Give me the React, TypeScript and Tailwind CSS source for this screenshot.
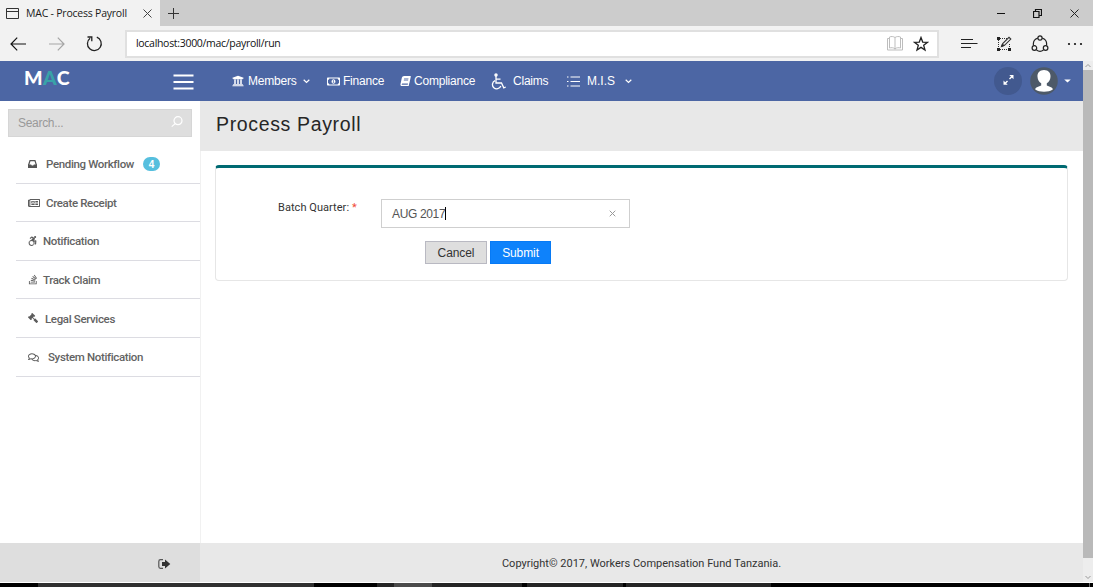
import React from "react";
import {
  FaUniversity,
  FaRegMoneyBillAlt,
  FaBook,
  FaRegNewspaper,
  FaAccessibleIcon,
  FaStackOverflow,
  FaGavel,
  FaRegComments,
} from "react-icons/fa";

function TabStrip() {
  return (
    <div className="flex h-[26px] bg-[#cccccc] font-['Open_Sans','Noto_Sans',sans-serif] text-[#1a1a1a]">
      <div className="flex w-[160px] items-center bg-[#f2f2f2] pl-[6px]">
        <svg width="13" height="11" viewBox="0 0 13 11" fill="none" stroke="#333">
          <path d="M.5.5h12v10H.5zM.5 3.500h12" />
        </svg>
        <span className="mt-px ml-[7px] w-[101px] whitespace-nowrap text-[10.5px] tracking-[-0.22px]">MAC - Process Payroll</span>
        <svg className="ml-[16px]" width="9" height="9" viewBox="0 0 9 9" stroke="#444">
          <path d="M.5.5l8 8M8.500.5l-8 8" />
        </svg>
      </div>
      <div className="flex flex-1 items-center pl-[8px]">
        <svg width="11" height="11" viewBox="0 0 11 11" stroke="#333">
          <path d="M5.500 0v11M0 5.500h11" />
        </svg>
      </div>
      <div className="flex items-center pr-[14px]">
        <svg width="9" height="9" viewBox="0 0 9 9" stroke="#111">
          <path d="M1 4.500h8" />
        </svg>
        <svg className="ml-[28px]" width="9" height="9" viewBox="0 0 9 9" fill="none" stroke="#111">
          <path d="M.5 2.500h5.500v6H.5zM2.500 2.500v-2h6v6h-2" strokeWidth="1.200" />
        </svg>
        <svg className="ml-[28px]" width="9" height="9" viewBox="0 0 9 9" stroke="#222">
          <path d="M.5.5l8 8M8.500.5l-8 8" />
        </svg>
      </div>
    </div>
  );
}

function Toolbar() {
  return (
    <div className="flex h-[35px] items-center bg-[#f2f2f2]">
      <svg className="ml-[10px]" width="16" height="14" viewBox="0 0 16 14" fill="none" stroke="#111" strokeWidth="1.200">
        <path d="M1 7h15M7.200.7L1 7l6.200 6.300" />
      </svg>
      <svg className="ml-[23px]" width="16" height="14" viewBox="0 0 16 14" fill="none" stroke="#a5a5a5" strokeWidth="1.200">
        <path d="M0 7h15M8.800.7L15 7l-6.200 6.300" />
      </svg>
      <svg className="ml-[21px]" width="17" height="17" viewBox="0 0 17 17" fill="none" stroke="#222" strokeWidth="1.300">
        <path d="M10.800 2.200a6.900 6.900 0 1 1-6.700 1M1.500 2h4.300v4.200" />
      </svg>
      <div className="ml-[22px] flex h-[28px] w-[814px] items-center border-2 border-[#e0e0e0] bg-white pl-[9px]">
        <span className="font-['Open_Sans','Noto_Sans',sans-serif] text-[10.500px] tracking-[-0.3px] text-[#111]">
          localhost:3000/mac/payroll/run
        </span>
        <div className="flex-1" />
        <svg width="16" height="15" viewBox="0 0 16 15" fill="none" stroke="#bdbdbd" strokeWidth="1">
          <path d="M8 1.500C6.500.3 4 .3 2.500 1v11C4 11.500 6.500 11.500 8 12.800 9.500 11.500 12 11.500 13.500 12V1C12 .3 9.500.3 8 1.500zM8 1.500v12M2.500 2.500h-2v11.500h15V2.500h-2" />
        </svg>
        <svg className="ml-[10px] mr-[8px]" width="16" height="16" viewBox="0 0 16 16" fill="none" stroke="#222" strokeWidth="1.300">
          <path d="M8 1.500l1.700 4.600 4.800.2-3.800 3 1.300 4.800L8 11.400 4 14.100l1.300-4.800-3.800-3 4.800-.2z" />
        </svg>
      </div>
      <svg className="ml-[22px]" width="17" height="11" viewBox="0 0 17 11" stroke="#222" strokeWidth="1.200">
        <path d="M0 1.500h12M0 5.500h16.500M0 9.500h10" />
      </svg>
      <svg className="ml-[18px]" width="17" height="16" viewBox="0 0 17 16" fill="none" stroke="#333">
        <path d="M4 2.500h8M2.500 4v8M4 13.500h8M13.500 8v4" strokeDasharray="1 1" />
        <path d="M1 1h3v3H1zM1 12h3v3H1zM12 12h3v3h-3z" fill="#222" stroke="none" />
        <path d="M5.500 10.500l1.200-3L13 1.300l1.800 1.800L8.500 9.300z" strokeWidth="1.100" />
        <path d="M5.500 10.500l1-2.500 1.500 1.500z" fill="#222" />
      </svg>
      <svg className="ml-[18px]" width="18" height="18" viewBox="0 0 18 18" fill="none" stroke="#222" strokeWidth="1.200">
        <path d="M6.800 3A6.800 6.800 0 0 0 2.500 10.500M11.200 3a6.800 6.800 0 0 1 4.300 7.500M5.500 15c2 1.500 5 1.500 7 0" />
        <circle cx="9" cy="3" r="2.100" />
        <circle cx="3.400" cy="13" r="2.300" />
        <circle cx="14.600" cy="13" r="2.300" />
      </svg>
      <svg className="ml-[18px]" width="16" height="4" viewBox="0 0 16 4" fill="#111">
        <circle cx="2" cy="2" r="1.100" />
        <circle cx="8" cy="2" r="1.100" />
        <circle cx="14" cy="2" r="1.100" />
      </svg>
    </div>
  );
}

function Chevron() {
  return (
    <svg width="7" height="5" viewBox="0 0 7 5" fill="none" stroke="white" strokeWidth="1.200">
      <path d="M.7.8l2.800 2.700L6.300.8" />
    </svg>
  );
}

function Header() {
  return (
    <header className="flex h-[40px] shrink-0 items-center bg-[#4c66a4] font-['Liberation_Sans',sans-serif] text-[12px] tracking-[-0.22px] text-white">
      <div className="ml-[24px] w-[149px] pb-[6px] font-['Lato',sans-serif] text-[19.500px] leading-[22px] font-black tracking-[0.4px]">
        M<span className="text-[#38a3a8]">A</span>C
      </div>
      <svg className="mt-px" width="21" height="16" viewBox="0 0 21 16" stroke="white" strokeWidth="2">
        <path d="M.5 1.500h20M.5 8h20M.5 14.500h20" />
      </svg>
      <nav className="flex flex-1 items-center whitespace-nowrap">
        <FaUniversity className="ml-[38px] h-[12px] w-[12px]" />
        <span className="ml-[4px] w-[55px]">Members</span>
        <Chevron />
        <FaRegMoneyBillAlt className="ml-[17px] h-[13px] w-[13px]" />
        <span className="ml-[3px] w-[57px]">Finance</span>
        <FaBook className="h-[10px] w-[11px] -skew-x-12" />
        <span className="ml-[3px] w-[77px]">Compliance</span>
        <svg width="15" height="17" viewBox="0 0 15 17" fill="none" stroke="white" strokeWidth="1.300">
          <circle cx="5" cy="2" r="1.100" fill="white" />
          <path d="M5 3v7h5.500l2.300 4.800 2-.8M5 6.200h4.500M4 7.600A4.300 4.300 0 1 0 9.800 13" />
        </svg>
        <span className="ml-[7px] w-[54px]">Claims</span>
        <svg width="13" height="11" viewBox="0 0 13 11" stroke="white">
          <path d="M0 1h1.500M3.500 1H13M0 5.500h1.500M3.500 5.500H13M0 10h1.500M3.500 10H13" />
        </svg>
        <span className="ml-[7px] w-[38px] tracking-normal">M.I.S</span>
        <Chevron />
      </nav>
      <div className="flex h-[28px] w-[28px] items-center justify-center rounded-full bg-[#42598f]">
        <svg className="mb-[2px]" width="11" height="10" viewBox="0 0 11 10" fill="white" stroke="white">
          <path d="M6.500 4L9 1.500M4.500 6L2 8.500" strokeWidth="1.400" />
          <path d="M6.300 0h4.200v4.200zM.5 5.500v4.200h4.200z" stroke="none" />
        </svg>
      </div>
      <svg className="ml-[8px]" width="28" height="28" viewBox="0 0 28 28">
        <circle cx="14" cy="14" r="13.800" fill="#4d5968" />
        <path d="M14 3C9.800 3 7.200 5.800 7.500 9.700c.2 3 1.600 5.400 3.700 6.600v2.200c-2.400 1.100-5.300 1.500-6.200 3.700C7.500 24 10.500 24.700 14 24.700s6.500-.7 9-2.500c-.9-2.200-3.800-2.600-6.200-3.700v-2.200c2.100-1.200 3.500-3.600 3.700-6.600C20.800 5.800 18.200 3 14 3z" fill="white" />
      </svg>
      <svg className="mr-[12px] ml-[6px]" width="7" height="4" viewBox="0 0 7 4" fill="white">
        <path d="M.2.5h6.600L3.500 3.600z" />
      </svg>
    </header>
  );
}

function InboxIcon() {
  return (
    <svg width="9" height="8" viewBox="0 0 9 8" fill="none" stroke="#555" strokeWidth="1.200">
      <path d="M.6 5L2 .7h5L8.400 5v2.300H.6z" />
      <path d="M.6 5h2.200l.7 1.200h2L6.200 5h2.200v2.300H.6z" fill="#555" />
    </svg>
  );
}

function SideItem({ icon, gap, label, badge }: { icon: React.ReactNode; gap: string; label: string; badge?: string }) {
  return (
    <div className="flex h-[38.600px] items-center border-b-[1.500px] border-[#dcdce2] pt-px pl-[12px] text-[11px] font-bold whitespace-nowrap text-[#5c5c5c]">
      {icon}
      <span className={`${gap} mt-px font-['Roboto',sans-serif] text-[11.500px] font-medium tracking-[-0.35px] text-[#636363]`}>{label}</span>
      {badge && (
        <span className="ml-[9px] flex h-[14px] w-[17px] items-center justify-center rounded-full bg-[#56bfde] text-[10px] text-white">
          {badge}
        </span>
      )}
    </div>
  );
}

function Sidebar() {
  return (
    <aside className="flex w-[200px] shrink-0 flex-col bg-white font-['Liberation_Sans',sans-serif]">
      <div className="mt-[8px] mr-[8px] ml-[8px] flex h-[28px] shrink-0 items-center justify-between border border-[#d6d6d6] bg-[#dedede] pr-[8px] pl-[9px] text-[12px] tracking-[-0.3px] text-[#999]">
        <span>Search...</span>
        <svg className="mb-[2px]" width="12" height="12" viewBox="0 0 12 12" fill="none" stroke="white" strokeWidth="1.200">
          <circle cx="7" cy="4.700" r="4" />
          <path d="M4.200 7.600L.7 10.600" />
        </svg>
      </div>
      <div className="mt-[8px] ml-[16px] flex-1">
        <SideItem icon={<InboxIcon />} gap="ml-[9px]" label="Pending Workflow" badge="4" />
        <SideItem icon={<FaRegNewspaper className="h-[12px] w-[12px]" />} gap="ml-[6px]" label="Create Receipt" />
        <SideItem icon={<FaAccessibleIcon className="h-[10px] w-[9px]" />} gap="ml-[6px]" label="Notification" />
        <SideItem icon={<FaStackOverflow className="mb-px h-[11px] w-[10px]" />} gap="ml-[5px]" label="Track Claim" />
        <SideItem icon={<FaGavel className="mb-[2px] h-[10px] w-[10px] -scale-x-100" />} gap="ml-[7px]" label="Legal Services" />
        <SideItem icon={<FaRegComments className="h-[11px] w-[11px]" />} gap="ml-[9px]" label="System Notification" />
      </div>
      <div className="flex h-[39px] items-center bg-[#dedede] pt-[3px] pl-[158px]">
        <svg width="13" height="10" viewBox="0 0 13 10" fill="#333">
          <path d="M5 .7H2.500C1.300.7.8 1.300.8 2.500v5c0 1.200.5 1.800 1.700 1.800H5" fill="none" stroke="#555" strokeWidth="1.200" />
          <path d="M4 3h3V.5L12.300 5 7 9.500V7H4z" />
        </svg>
      </div>
    </aside>
  );
}

function Content() {
  return (
    <main className="flex flex-1 flex-col border-l border-[#f1f1f1] bg-white font-['Liberation_Sans',sans-serif]">
      <div className="-ml-px flex h-[50px] shrink-0 items-center bg-[#e8e8e8] pb-[2px] pl-[16px] text-[19.500px] tracking-[0.65px] text-[#262626]">
        <h1>Process Payroll</h1>
      </div>
      <div className="-ml-px flex-1 pt-[14px] pr-[15px] pl-[15px]">
        <section className="h-[116px] rounded-[4px] border border-t-[3px] border-[#e6e6e6] border-t-[#006a72] pt-[31px] text-[12px]">
          <div className="flex">
            <label className="w-[165px] pt-[2px] pl-[62px] font-['Roboto',sans-serif] text-[11px] leading-[14px] tracking-[0.05px] whitespace-nowrap text-[#333]">
              Batch Quarter: <span className="text-[#f04a38]">*</span>
            </label>
            <div className="flex h-[29px] w-[249px] items-center border border-[#cfcfcf] pl-[10px] text-[12px] tracking-[-0.35px] text-[#555]">
              <span className="mt-px">AUG 2017</span>
              <span className="h-[13px] w-px bg-black" />
              <svg className="mr-[13px] ml-auto" width="7" height="7" viewBox="0 0 7 7" stroke="#999">
                <path d="M.7.7l5.600 5.600M6.300.7L.7 6.300" />
              </svg>
            </div>
          </div>
          <div className="mt-[13px] ml-[209px] flex gap-[3px] text-[12px] tracking-[-0.1px]">
            <button className="h-[23px] w-[62px] border border-[#b9b9c2] bg-[#dedede] text-[#333]">Cancel</button>
            <button className="h-[23px] w-[61px] border border-[#077af5] bg-[#0e82fb] text-white">Submit</button>
          </div>
        </section>
      </div>
      <footer className="-ml-px flex h-[39px] items-center justify-center bg-[#e8e8e8] pt-[3px] font-['Roboto',sans-serif] text-[11px] text-[#333]">
        Copyright© 2017, Workers Compensation Fund Tanzania.
      </footer>
    </main>
  );
}

function Scrollbar() {
  return (
    <div className="flex w-[10px] shrink-0 flex-col items-center bg-[#ededed]">
      <svg className="my-[2px]" width="6" height="5" viewBox="0 0 6 5" fill="none" stroke="#999">
        <path d="M.5 4L3 1.500 5.500 4" />
      </svg>
      <div className="h-[488px] w-full bg-[#b9b9b9]" />
      <svg className="mt-auto mb-[2px]" width="6" height="5" viewBox="0 0 6 5" fill="none" stroke="#999">
        <path d="M.5 1L3 3.500 5.500 1" />
      </svg>
    </div>
  );
}

export default function App() {
  return (
    <div className="flex h-[587px] w-[1093px] flex-col overflow-hidden bg-white">
      <TabStrip />
      <Toolbar />
      <div className="flex h-[521px] shrink-0">
        <div className="flex flex-1 flex-col">
          <Header />
          <div className="flex flex-1">
            <Sidebar />
            <Content />
          </div>
        </div>
        <Scrollbar />
      </div>
      <div className="mt-px flex h-[4px] shrink-0 bg-black">
        <div className="ml-[38px] w-[276px] bg-[#303030]" />
        <div className="ml-[63px] w-[17px] bg-[#252525]" />
        <div className="w-[38px] bg-[#4b4b4b]" />
        <div className="w-[90px] bg-[#252525]" />
        <div className="ml-[5px] w-[96px] bg-[#252525]" />
        <div className="ml-[3px] w-[145px] bg-[#252525]" />
        <div className="ml-auto mr-[3px] w-px bg-[#666]" />
      </div>
    </div>
  );
}
